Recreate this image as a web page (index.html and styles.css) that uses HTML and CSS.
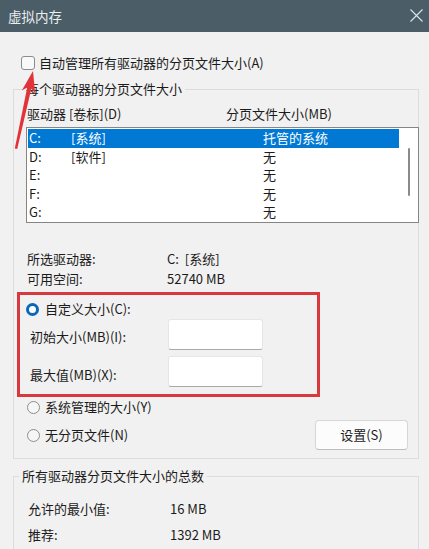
FILE: index.html
```html
<!DOCTYPE html>
<html lang="zh-CN">
<head>
<meta charset="utf-8">
<title>虚拟内存</title>
<link rel="stylesheet" href="styles.css">
</head>
<body>
<div class="titlebar">
  <span class="title">虚拟内存</span>
  <svg class="close" width="13" height="13" viewBox="0 0 13 13"><path d="M0.5 0.5 L12.5 12.5 M12.5 0.5 L0.5 12.5" stroke="#dfe5e8" stroke-width="1.1" fill="none"/></svg>
</div>
<div class="main">
  <div class="auto-row">
    <span class="checkbox"></span>
    <span>自动管理所有驱动器的分页文件大小(A)</span>
  </div>

  <fieldset class="group group-drives">
    <legend>每个驱动器的分页文件大小</legend>
    <div class="list-head">
      <span class="col-drive">驱动器 [卷标](D)</span>
      <span>分页文件大小(MB)</span>
    </div>
    <div class="listbox">
      <div class="rows">
        <div class="row selected"><span>C:</span><span>[系统]</span><span>托管的系统</span></div>
        <div class="row"><span>D:</span><span>[软件]</span><span>无</span></div>
        <div class="row"><span>E:</span><span></span><span>无</span></div>
        <div class="row"><span>F:</span><span></span><span>无</span></div>
        <div class="row"><span>G:</span><span></span><span>无</span></div>
      </div>
      <div class="scrolltrack"><div class="thumb"></div></div>
    </div>

    <div class="info info-first"><span class="info-label">所选驱动器:</span><span>C:&nbsp; [系统]</span></div>
    <div class="info"><span class="info-label">可用空间:</span><span>52740 MB</span></div>

    <div class="custom-box">
      <div class="radio-row"><span class="radio on"></span><span>自定义大小(C):</span></div>
      <div class="size-row size-row-1"><span class="size-label lbl-1">初始大小(MB)(I):</span><span class="textbox"></span></div>
      <div class="size-row size-row-2"><span class="size-label lbl-2">最大值(MB)(X):</span><span class="textbox"></span></div>
    </div>

    <div class="radio-row plain sys"><span class="radio"></span><span>系统管理的大小(Y)</span></div>
    <div class="set-row">
      <div class="radio-row plain"><span class="radio"></span><span>无分页文件(N)</span></div>
      <button class="btn">设置(S)</button>
    </div>
  </fieldset>

  <fieldset class="group group-total">
    <legend>所有驱动器分页文件大小的总数</legend>
    <div class="total total-first"><span class="total-label">允许的最小值:</span><span>16 MB</span></div>
    <div class="total"><span class="total-label">推荐:</span><span>1392 MB</span></div>
  </fieldset>
</div>

<svg class="arrow" width="50" height="160" viewBox="0 0 50 160">
  <polygon points="33,71 35.2,93.5 31.4,88.6 17.2,149 14.8,148.5 27.2,87.6 21.8,90.6" fill="#e1343a"/>
</svg>
</body>
</html>
```

FILE: styles.css
```css
* { box-sizing: border-box; }

html, body {
  margin: 0;
  padding: 0;
  background: #f1f1f1;
}

body {
  width: 429px;
  height: 549px;
  overflow: hidden;
  position: relative;
  font-family: "Noto Sans CJK SC", "Noto Sans", sans-serif;
  font-size: 13px;
  color: #1b1b1b;
}

.titlebar {
  height: 32px;
  background: #4b5d67;
  display: flex;
  align-items: center;
  justify-content: space-between;
  padding: 0 6px 0 8px;
}

.title {
  color: #e9eef0;
  font-size: 13.5px;
  line-height: 18px;
}

.close { display: block; margin-top: -1px; }

.main {
  padding: 0 10px 0 13px;
}

.auto-row {
  margin-top: 24px;
  padding-left: 8px;
  height: 14px;
  display: flex;
  align-items: center;
  gap: 4px;
  line-height: 14px;
}

.checkbox {
  width: 14px;
  height: 14px;
  border: 1px solid #8b8b8b;
  border-radius: 3px;
  background: #f9f9f9;
  flex: none;
}

.group {
  margin: 0;
  border: 1px solid #dcdcdc;
  min-inline-size: 0;
}

.group legend {
  line-height: 16px;
  padding: 0 3px;
}

.group-drives {
  margin-top: 11px;
  padding: 0 0 8px 12px;
}

.group-drives legend { margin-left: -3px; }

.list-head {
  margin-top: 9px;
  display: flex;
  line-height: 16px;
  padding-left: 1px;
}

.col-drive { width: 199px; }

.listbox {
  margin-top: 5px;
  margin-right: -1px;
  height: 96px;
  border: 1px solid #858585;
  background: #ffffff;
  padding: 1px 0 0 1px;
  display: flex;
}

.rows { width: 371px; }

.row {
  height: 18.5px;
  line-height: 18.5px;
  display: grid;
  grid-template-columns: 42px 192px 1fr;
  padding-left: 1px;
}

.row.selected {
  background: #0078d4;
  color: #ffffff;
}

.scrolltrack { flex: 1; }

.thumb {
  width: 2px;
  height: 48px;
  margin: 19px 0 0 9px;
  background: #8a8a8a;
  border-radius: 1px;
}

.info {
  display: flex;
  line-height: 20px;
  padding-left: 1px;
}

.info-first { margin-top: 26px; }

.info-label { width: 140px; }

.custom-box {
  margin: 3px 0 0 -9px;
  width: 303px;
  border: 3px solid #d8393f;
  padding: 5px 0 7px 0;
}

.radio-row {
  display: flex;
  align-items: center;
  line-height: 18px;
  height: 18px;
  padding-left: 6px;
  gap: 6px;
}

.radio {
  width: 13px;
  height: 13px;
  border-radius: 50%;
  border: 1px solid #8d8d8d;
  background: #f6f6f6;
  flex: none;
}

.radio.on {
  border: 3.5px solid #0a67b8;
  background: #ffffff;
}

.size-row {
  display: flex;
  align-items: center;
  height: 31px;
}

.size-row-1 { margin-top: 1px; }
.size-row-2 { margin-top: 6px; }

.size-label {
  width: 148px;
  padding-left: 10px;
  line-height: 18px;
}

.lbl-1 { padding-top: 4px; }
.lbl-2 { padding-top: 6px; }

.textbox {
  width: 95px;
  height: 31px;
  background: #ffffff;
  border: 1px solid #e6e6e6;
  border-bottom: 1px solid #a9a9a9;
  border-radius: 3px;
}

.radio-row.plain {
  padding-left: 1px;
  gap: 5px;
}

.sys { margin-top: 1px; }

.set-row {
  margin-top: 4px;
  height: 30px;
  display: flex;
  align-items: center;
  justify-content: space-between;
}

.btn {
  width: 93px;
  height: 30px;
  margin-right: 10px;
  font: inherit;
  color: #1b1b1b;
  background: #fcfcfc;
  border: 1px solid #d6d6d6;
  border-bottom-color: #bdbdbd;
  border-radius: 4px;
  padding: 0;
  line-height: 28px;
}

.group-total {
  margin-top: 9px;
  padding: 0 0 20px 14px;
}

.group-total legend { margin-left: -9px; }

.total {
  display: flex;
  line-height: 20px;
}

.total-first { margin-top: 15px; }
.total + .total { margin-top: 6px; }

.total-label { width: 142px; }

.arrow {
  position: absolute;
  left: 0;
  top: 0;
}
```
